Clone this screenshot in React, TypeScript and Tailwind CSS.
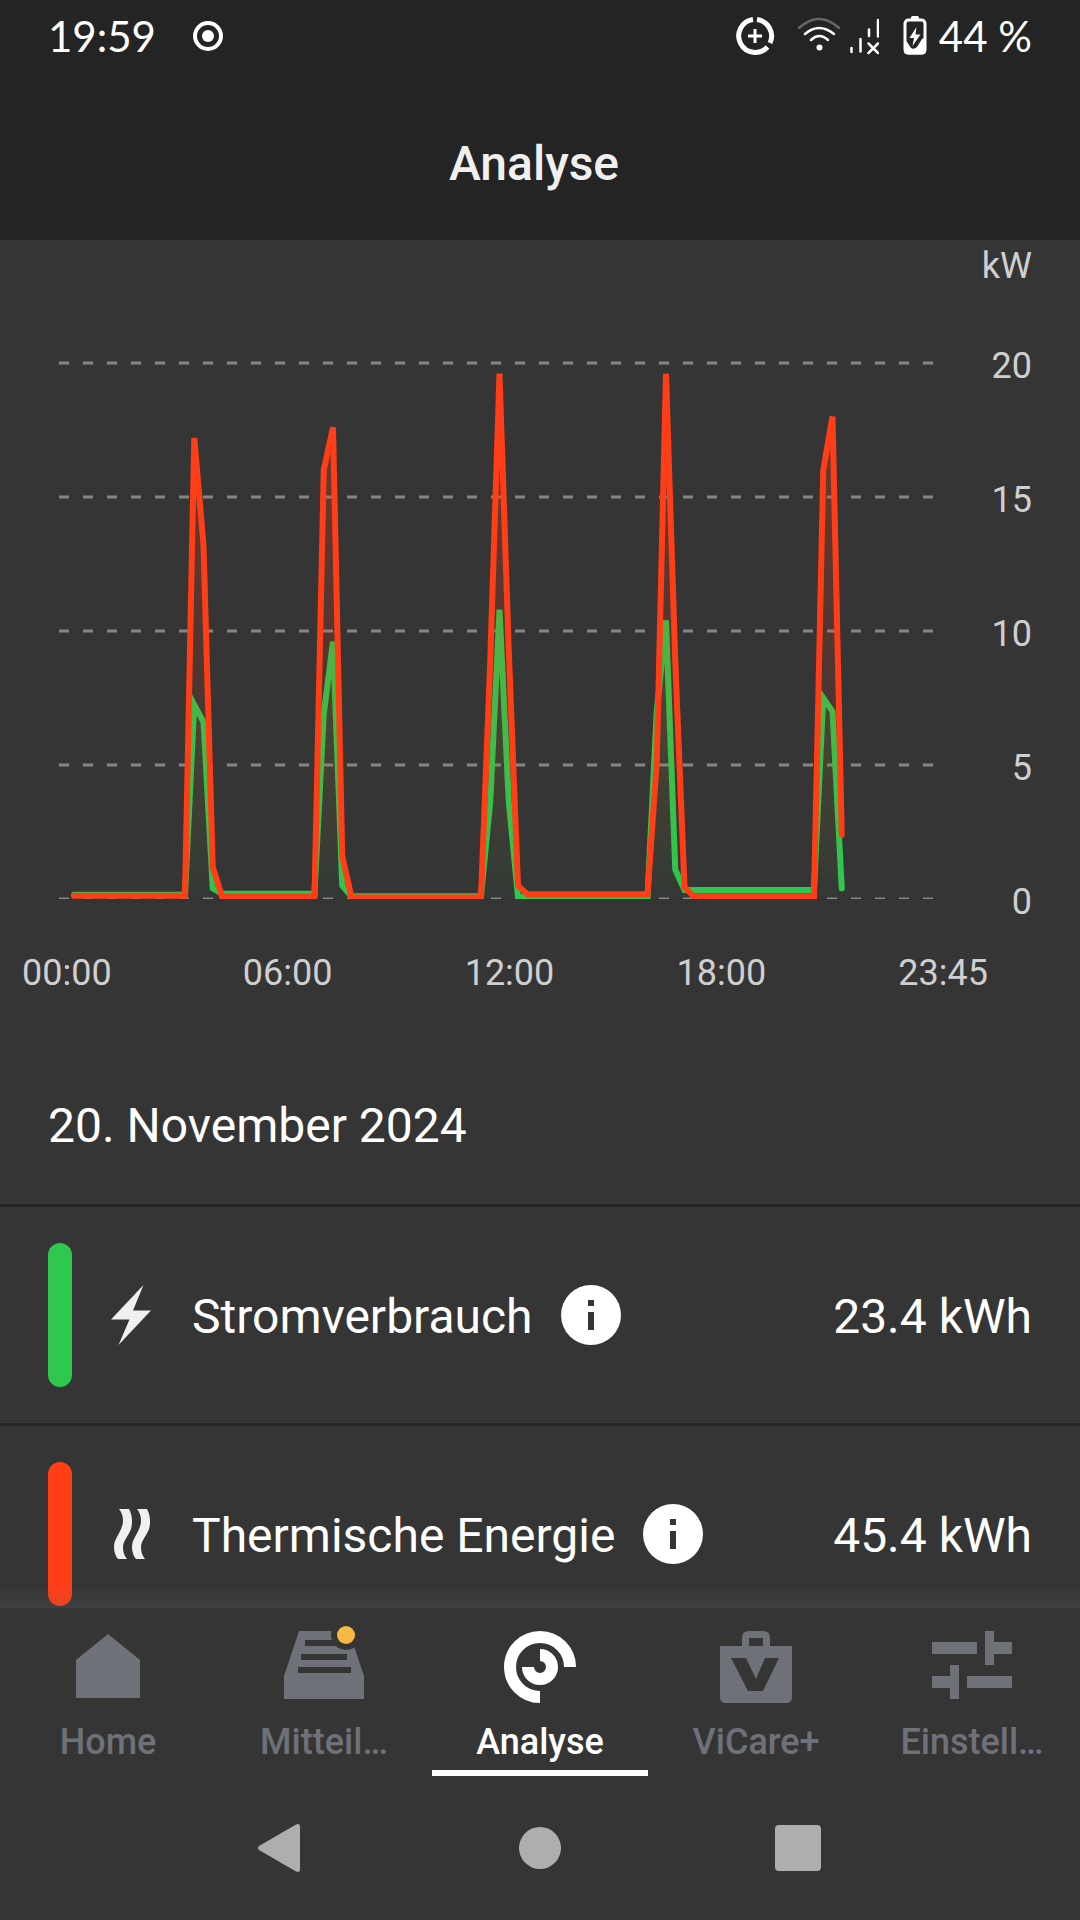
import { ReactNode } from "react";

// [quarter hour of the day, kW]
type Sample = [number, number];

const electricity: Sample[] = [
  [0, 0.16], [12, 0.16], [13, 7.25], [14, 6.6], [15, 0.4], [16, 0.2], [26, 0.2],
  [27, 6.9], [28, 9.6], [29, 0.5], [30, 0.1], [44, 0.1], [45, 3.65], [46, 10.8],
  [47, 3.65], [48, 0.07], [62, 0.07], [63, 7], [64, 10.4], [65, 1.1], [66, 0.34],
  [80, 0.34], [81, 7.5], [82, 7], [83, 0.4],
];

const thermal: Sample[] = [
  [0, 0.12], [12, 0.12], [13, 17.2], [14, 13.2], [15, 1.2], [16, 0.1], [26, 0.1],
  [27, 16], [28, 17.6], [29, 1.6], [30, 0.06], [44, 0.06], [45, 8.9], [46, 19.6],
  [47, 9.3], [48, 0.5], [49, 0.18], [62, 0.18], [63, 5.1], [64, 19.6], [65, 8.9],
  [66, 0.45], [67, 0.1], [80, 0.1], [81, 16], [82, 18], [83, 2.4],
];

const BASELINE = 659;
const PX_PER_KW = 26.8;

function toX(i: number) {
  return 74 + i * 9.25;
}

function toY(kw: number) {
  return BASELINE - kw * PX_PER_KW;
}

function linePoints(samples: Sample[]) {
  return samples.map(([i, kw]) => `${toX(i)},${toY(kw)}`).join(" ");
}

function areaPoints(samples: Sample[]) {
  const last = samples[samples.length - 1];
  return `${toX(0)},${BASELINE} ${linePoints(samples)} ${toX(last[0])},${BASELINE}`;
}

function PowerChart() {
  return (
    <svg
      viewBox="0 0 960 684"
      preserveAspectRatio="none"
      className="h-[684px] min-w-0 flex-1"
      role="img"
      aria-label="Leistung in kW über den Tag"
    >
      <defs>
        <linearGradient id="thermalFill" x1="0" y1="0" x2="0" y2="1">
          <stop offset="0" stopColor="#ff3e17" stopOpacity="0.3" />
          <stop offset="1" stopColor="#ff3e17" stopOpacity="0" />
        </linearGradient>
        <linearGradient id="electricityFill" x1="0" y1="0" x2="0" y2="1">
          <stop offset="0" stopColor="#2dc84d" stopOpacity="0.15" />
          <stop offset="1" stopColor="#2dc84d" stopOpacity="0.02" />
        </linearGradient>
        <clipPath id="plot">
          <rect x="0" y="0" width="960" height={BASELINE} />
        </clipPath>
      </defs>
      <g clipPath="url(#plot)" fill="none">
        {[20, 15, 10, 5, 0].map((kw) => (
          <line
            key={kw}
            x1="59"
            x2="934"
            y1={toY(kw)}
            y2={toY(kw)}
            stroke="#868686"
            strokeWidth="3"
            strokeDasharray="10 14"
          />
        ))}
        <polygon points={areaPoints(electricity)} fill="url(#electricityFill)" />
        <polyline points={linePoints(electricity)} stroke="#2dc84d" strokeWidth="6" strokeMiterlimit="4" strokeLinecap="round" />
        <polygon points={areaPoints(thermal)} fill="url(#thermalFill)" />
        <polyline points={linePoints(thermal)} stroke="#ff3e17" strokeWidth="6" strokeMiterlimit="4" strokeLinecap="round" />
      </g>
    </svg>
  );
}

function StatusBar() {
  return (
    <div className="flex h-[72px] items-center px-12 font-[Lato] text-[42px] leading-[50px] text-white">
      <span>19:59</span>
      <svg viewBox="0 0 32 32" className="ml-9 size-8" fill="none">
        <circle cx="16" cy="16" r="13" stroke="currentColor" strokeWidth="4" />
        <circle cx="16" cy="16" r="6" fill="currentColor" />
      </svg>
      <div className="ml-auto flex items-center">
        <svg viewBox="0 0 40 40" className="size-10" fill="none" stroke="currentColor">
          <path d="M22 3.600A16.500 16.500 0 0 1 35 27M32.500 31A16.500 16.500 0 1 1 18 3.600" strokeWidth="5" />
          <path d="M20 13V27M13 20H27" strokeWidth="3" />
        </svg>
        <svg viewBox="0 0 44 40" className="ml-[22px] h-10 w-11" fill="none" stroke="currentColor" strokeLinecap="round">
          <path d="M2 12Q22 -6 42 12" stroke="#666" strokeWidth="2.5" />
          <path d="M8 18Q22 6 37 18" strokeWidth="2.5" />
          <path d="M14 24Q22 16 31 24" strokeWidth="2.5" />
          <circle cx="22.5" cy="31.5" r="3" fill="currentColor" stroke="none" />
        </svg>
        <svg viewBox="0 0 30 40" className="ml-2 h-10 w-[30px]" fill="none" stroke="currentColor" strokeLinecap="round">
          <path d="M2.5 32V36M11.5 23V35.500M20 13.500V20M29 4V20.500" strokeWidth="2.500" />
          <path d="M19.500 27.500L29 37M29 27.500L19.500 37" strokeWidth="2.500" />
        </svg>
        <svg viewBox="0 0 24 40" className="ml-6 h-10 w-6" fill="none">
          <rect x="8" y="0" width="8" height="4" rx="1.500" fill="currentColor" />
          <rect x="2" y="4" width="20" height="33" rx="3.500" stroke="currentColor" strokeWidth="3" />
          <path d="M1 22L4 26L8 32Q11 34 14 31L19 23L23 21V35Q23 38.500 19 38.500H5Q1 38.500 1 35Z" fill="currentColor" />
          <path d="M13.500 11L6.500 22H11L9.500 30L17.500 18.500H12.500Z" fill="currentColor" />
        </svg>
        <span className="ml-3">44 %</span>
      </div>
    </div>
  );
}

function BoltIcon() {
  return (
    <svg viewBox="0 0 60 60" className="size-[60px]" fill="#f0f0f0">
      <path d="M41.500 0L31 25.500H49L16.500 60L27.500 34.500H9Z" />
    </svg>
  );
}

function HeatIcon() {
  const wave =
    "M17 5H27C30 10 31 18 29 25C27 31 21 37 21 43C21 48 22 51 25 55H16C12 50 11 43 13 37C16 30 21 24 21 17C21 12 20 9 17 5Z";
  return (
    <svg viewBox="0 0 60 60" className="size-[60px]" fill="#f0f0f0">
      <path d={wave} />
      <path d={wave} transform="translate(18 0)" />
    </svg>
  );
}

interface EnergyRowProps {
  bar: string;
  icon: ReactNode;
  label: string;
  value: string;
}

function EnergyRow({ bar, icon, label, value }: EnergyRowProps) {
  return (
    <li className="flex items-center border-t-3 border-[#242424] px-12 py-9">
      <span className={`mr-[30px] h-36 w-6 rounded-full ${bar}`} />
      {icon}
      <span className="mr-7 ml-[30px] pt-1">{label}</span>
      <button type="button" aria-label={`Info zu ${label}`}>
        <svg viewBox="0 0 60 60" className="block size-[60px]">
          <circle cx="30" cy="30" r="30" fill="#fff" />
          <path d="M27 15H33V21H27ZM27 27H33V45H27Z" fill="#353535" />
        </svg>
      </button>
      <span className="ml-auto pt-1">{value}</span>
    </li>
  );
}

const tabs: { label: string; active?: boolean; icon: ReactNode }[] = [
  {
    label: "Home",
    icon: <path d="M44 10L76 36V74H12V36Z" fill="currentColor" />,
  },
  {
    label: "Mitteil…",
    icon: (
      <>
        <path d="M19 7H69L84 52V75H4V52Z" fill="currentColor" />
        <path d="M25 16H60V22H25ZM21 30H67V36H21ZM18 43H71V49H18Z" fill="#353535" />
        <circle cx="66" cy="11" r="15" fill="#353535" />
        <circle cx="66" cy="11" r="9" fill="#f5b944" />
      </>
    ),
  },
  {
    label: "Analyse",
    active: true,
    icon: (
      <g fill="none" stroke="currentColor" strokeWidth="12">
        <path d="M44 73A30 30 0 1 1 74 43" />
        <path d="M44 31A12 12 0 1 1 32 43" />
      </g>
    ),
  },
  {
    label: "ViCare+",
    icon: (
      <path
        d="M8 22H30V14Q30 7 37 7H51Q58 7 58 14V22H80V73Q80 79 74 79H14Q8 79 8 73ZM37 14V22H51V14ZM19 34L36 67H51L67 34H53L44 55L34 34Z"
        fill="currentColor"
        fillRule="evenodd"
      />
    ),
  },
  {
    label: "Einstell…",
    icon: (
      <path
        d="M4 18H49V30H4ZM57 7H66V18H84V30H66V41H57ZM4 52H22V41H31V75H22V64H4ZM39 52H84V64H39Z"
        fill="currentColor"
      />
    ),
  },
];

export default function App() {
  return (
    <div className="flex h-screen flex-col bg-[#353535] font-[Roboto,sans-serif] text-white">
      <header className="bg-[#242424]">
        <StatusBar />
        <h1 className="pt-16 pr-3 pb-12 text-center text-[48px] leading-[56px] font-medium text-[#f0f0f0]">Analyse</h1>
      </header>

      <main className="relative min-h-0 flex-1 overflow-hidden">
        <section className="text-[36px] leading-[42px] text-[#cfcfcf]">
          <div className="flex">
            <PowerChart />
            <div className="flex w-[120px] flex-col items-end pt-[5px] pr-12">
              <span>kW</span>
              <div className="mt-[58px] flex flex-col items-end gap-[92px]">
                <span>20</span>
                <span>15</span>
                <span>10</span>
                <span>5</span>
                <span>0</span>
              </div>
            </div>
          </div>
          <div className="mt-7 grid grid-cols-[221fr_222fr_212fr_222fr_88fr] pr-[92px] pl-[22px]">
            <span>00:00</span>
            <span>06:00</span>
            <span>12:00</span>
            <span>18:00</span>
            <span>23:45</span>
          </div>
        </section>

        <section className="text-[48px] leading-[56px]">
          <h2 className="mt-26 mb-[50px] px-12">20. November 2024</h2>
          <ul>
            <EnergyRow bar="bg-[#2dc84d]" icon={<BoltIcon />} label="Stromverbrauch" value="23.4 kWh" />
            <EnergyRow bar="bg-[#ff3e17]" icon={<HeatIcon />} label="Thermische Energie" value="45.4 kWh" />
          </ul>
        </section>

        <div className="absolute inset-x-0 bottom-0 h-6 bg-linear-to-b from-[#6b6b6b]/0 to-[#6b6b6b]/18" />
      </main>

      <nav className="grid grid-cols-5 text-[36px] leading-[42px] font-medium">
        {tabs.map((tab) => (
          <button
            key={tab.label}
            type="button"
            aria-current={tab.active ? "page" : undefined}
            className={`flex flex-col items-center border-b-6 pt-4 pb-[7px] ${
              tab.active ? "border-white text-white" : "border-transparent text-[#6f7179]"
            }`}
          >
            <svg viewBox="0 0 88 80" className="mb-[17px] h-20 w-[88px]">
              {tab.icon}
            </svg>
            {tab.label}
          </button>
        ))}
      </nav>

      {/* Android navigation */}
      <div className="flex h-36 items-center justify-center gap-[186px] text-[#aeaeae]">
        <button type="button" aria-label="Zurück">
          <svg viewBox="0 0 72 72" className="block size-[72px]" fill="currentColor">
            <path d="M13 34L50 12.500Q54 11 54 15V57Q54 61 50 59.500L13 38Q11 36 13 34Z" />
          </svg>
        </button>
        <button type="button" aria-label="Startbildschirm">
          <svg viewBox="0 0 72 72" className="block size-[72px]" fill="currentColor">
            <circle cx="36" cy="36" r="21" />
          </svg>
        </button>
        <button type="button" aria-label="Letzte Apps">
          <svg viewBox="0 0 72 72" className="block size-[72px]" fill="currentColor">
            <rect x="13" y="13" width="46" height="46" rx="4" />
          </svg>
        </button>
      </div>
    </div>
  );
}
